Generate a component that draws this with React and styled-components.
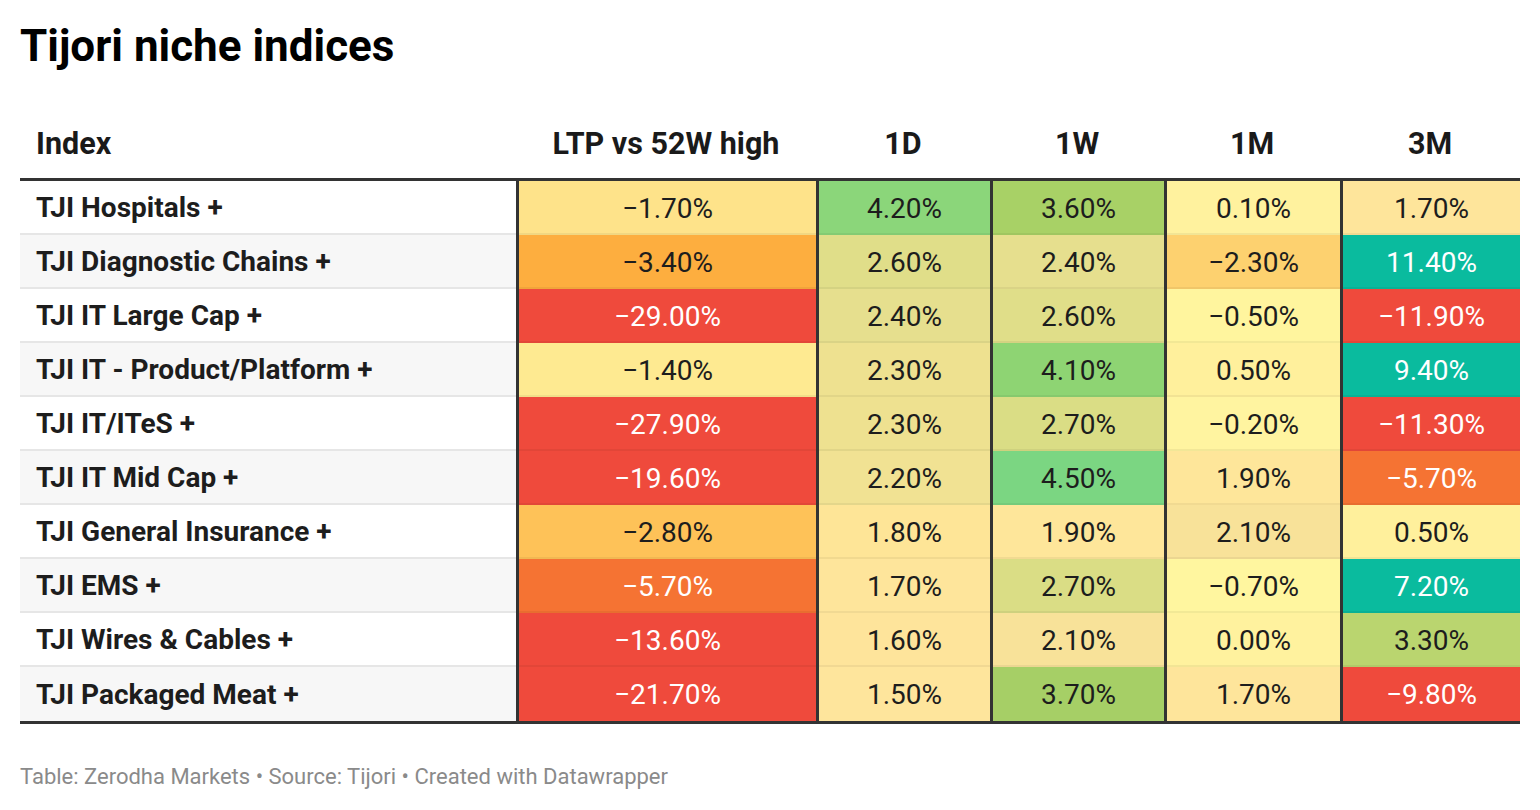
import React from "react";
import styled, { createGlobalStyle } from "styled-components";

const GlobalStyle = createGlobalStyle`
  html, body { margin: 0; padding: 0; background: #ffffff; }
  body { font-family: Roboto, "Liberation Sans", Arial, sans-serif; }
  * { box-sizing: border-box; }
`;

const Page = styled.div`
  padding: 20px 20px 0 20px;
  width: 1540px;
  color: #1d1d1d;
`;

const Title = styled.h1`
  margin: 0;
  font-size: 44px;
  line-height: 1.2;
  font-weight: 700;
  color: #000;
`;

const Table = styled.div`
  margin-top: 53px;
  display: grid;
  grid-template-columns: 496px 300px 174px 174px 176px 180px;
  width: 1500px;
  border-bottom: 3px solid #333333;
`;

const HeadCell = styled.div`
  font-size: 30.5px;
  line-height: 1.2;
  font-weight: 700;
  color: #1a1a1a;
  padding: 0 16px 16px 16px;
  text-align: ${(p) => (p.$left ? "left" : "center")};
  border-bottom: 3px solid #333333;
`;

const LabelCell = styled.div`
  height: 54px;
  display: flex;
  align-items: center;
  padding: 0 16px;
  font-size: 28px;
  font-weight: 700;
  color: #1d1d1d;
  background: ${(p) => (p.$alt ? "#f7f7f7" : "#ffffff")};
  border-bottom: ${(p) => (p.$last ? "none" : "2px solid #e6e6e6")};
`;

const ValueCell = styled.div`
  height: 54px;
  display: flex;
  align-items: center;
  justify-content: center;
  font-size: 28px;
  font-weight: 400;
  border-left: 3px solid #333333;
  background: ${(p) => p.$bg};
  color: ${(p) => (p.$light ? "#ffffff" : "#1d1d1d")};
  box-shadow: ${(p) => (p.$last ? "none" : "inset 0 -2px 0 rgba(0,0,0,0.05)")};
`;

const Footer = styled.div`
  margin-top: 40px;
  font-size: 22px;
  line-height: 1.2;
  color: #8a8a8a;
`;

const RED = "#EF4A3C";
const TEAL = "#0ABB9E";
const DORANGE = "#F57333";

const rows = [
  ["TJI Hospitals +", [["−1.70%", "#FEE38A"], ["4.20%", "#8BD67A"], ["3.60%", "#A8D166"], ["0.10%", "#FFF29E"], ["1.70%", "#FEE59B"]]],
  ["TJI Diagnostic Chains +", [["−3.40%", "#FDAE3F"], ["2.60%", "#E0DE89"], ["2.40%", "#E6DF8E"], ["−2.30%", "#FDD16F"], ["11.40%", TEAL, 1]]],
  ["TJI IT Large Cap +", [["−29.00%", RED, 1], ["2.40%", "#E6DF8E"], ["2.60%", "#E0DE89"], ["−0.50%", "#FFF59E"], ["−11.90%", RED, 1]]],
  ["TJI IT - Product/Platform +", [["−1.40%", "#FEEA91"], ["2.30%", "#EEE190"], ["4.10%", "#8ED473"], ["0.50%", "#FFF09C"], ["9.40%", TEAL, 1]]],
  ["TJI IT/ITeS +", [["−27.90%", RED, 1], ["2.30%", "#EEE190"], ["2.70%", "#DADD85"], ["−0.20%", "#FFF4A0"], ["−11.30%", RED, 1]]],
  ["TJI IT Mid Cap +", [["−19.60%", RED, 1], ["2.20%", "#F1E293"], ["4.50%", "#7BD682"], ["1.90%", "#FEE69A"], ["−5.70%", DORANGE, 1]]],
  ["TJI General Insurance +", [["−2.80%", "#FEC258"], ["1.80%", "#FEE597"], ["1.90%", "#FEE69A"], ["2.10%", "#F8E299"], ["0.50%", "#FFF09C"]]],
  ["TJI EMS +", [["−5.70%", DORANGE, 1], ["1.70%", "#FEE59B"], ["2.70%", "#DADD85"], ["−0.70%", "#FFF69F"], ["7.20%", TEAL, 1]]],
  ["TJI Wires & Cables +", [["−13.60%", RED, 1], ["1.60%", "#FEE49B"], ["2.10%", "#F8E299"], ["0.00%", "#FFF29E"], ["3.30%", "#BAD56F"]]],
  ["TJI Packaged Meat +", [["−21.70%", RED, 1], ["1.50%", "#FEE59C"], ["3.70%", "#A6CF66"], ["1.70%", "#FEE59B"], ["−9.80%", RED, 1]]],
];

const headers = ["LTP vs 52W high", "1D", "1W", "1M", "3M"];

export default function App() {
  return (
    <Page>
      <GlobalStyle />
      <Title>Tijori niche indices</Title>
      <Table>
        <HeadCell $left>Index</HeadCell>
        {headers.map((h) => (
          <HeadCell key={h}>{h}</HeadCell>
        ))}
        {rows.map(([label, vals], i) => {
          const last = i === rows.length - 1;
          return (
            <React.Fragment key={label}>
              <LabelCell $alt={i % 2 === 1} $last={last}>{label}</LabelCell>
              {vals.map(([v, bg, light], j) => (
                <ValueCell key={j} $bg={bg} $light={!!light} $last={last}>
                  {v}
                </ValueCell>
              ))}
            </React.Fragment>
          );
        })}
      </Table>
      <Footer>Table: Zerodha Markets • Source: Tijori • Created with Datawrapper</Footer>
    </Page>
  );
}
